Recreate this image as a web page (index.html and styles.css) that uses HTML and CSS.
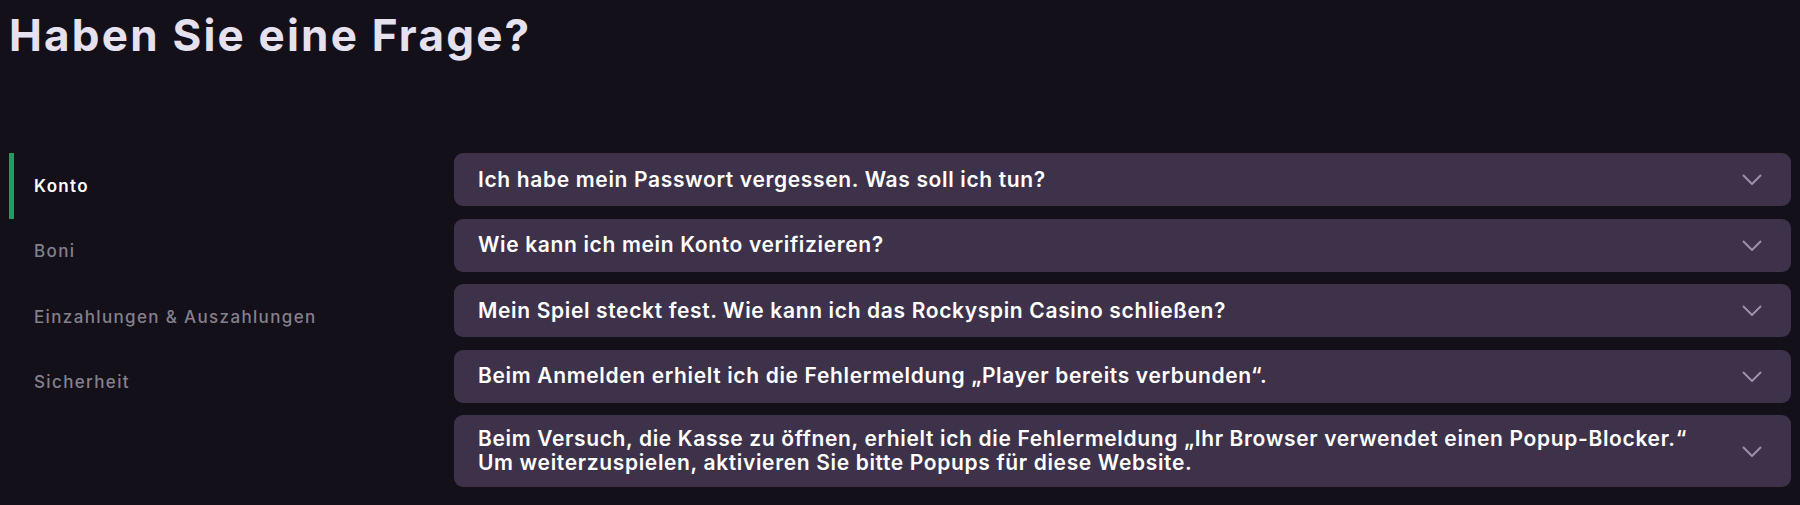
FILE: index.html
```html
<!DOCTYPE html>
<html lang="de">
<head>
<meta charset="utf-8">
<title>Haben Sie eine Frage?</title>
<link rel="stylesheet" href="styles.css">
</head>
<body>
<div class="page">
  <h1 class="title">Haben Sie eine Frage?</h1>
  <div class="faq">
    <nav class="tabs">
      <div class="tab active">Konto</div>
      <div class="tab">Boni</div>
      <div class="tab">Einzahlungen &amp; Auszahlungen</div>
      <div class="tab">Sicherheit</div>
    </nav>
    <div class="list">
      <div class="item"><span class="q">Ich habe mein Passwort vergessen. Was soll ich tun?</span><svg class="chev" viewBox="0 0 20 11" width="20" height="11"><polyline points="1,1 10,10 19,1"/></svg></div>
      <div class="item"><span class="q">Wie kann ich mein Konto verifizieren?</span><svg class="chev" viewBox="0 0 20 11" width="20" height="11"><polyline points="1,1 10,10 19,1"/></svg></div>
      <div class="item"><span class="q">Mein Spiel steckt fest. Wie kann ich das Rockyspin Casino schließen?</span><svg class="chev" viewBox="0 0 20 11" width="20" height="11"><polyline points="1,1 10,10 19,1"/></svg></div>
      <div class="item"><span class="q">Beim Anmelden erhielt ich die Fehlermeldung „Player bereits verbunden“.</span><svg class="chev" viewBox="0 0 20 11" width="20" height="11"><polyline points="1,1 10,10 19,1"/></svg></div>
      <div class="item"><span class="q">Beim Versuch, die Kasse zu öffnen, erhielt ich die Fehlermeldung „Ihr Browser verwendet einen Popup-Blocker.“<br>Um weiterzuspielen, aktivieren Sie bitte Popups für diese Website.</span><svg class="chev" viewBox="0 0 20 11" width="20" height="11"><polyline points="1,1 10,10 19,1"/></svg></div>
    </div>
  </div>
</div>
</body>
</html>
```
FILE: styles.css
```css
html, body {
  margin: 0;
  padding: 0;
  background: #13101a;
}
body {
  font-family: "Inter", "Liberation Sans", sans-serif;
  color: #ffffff;
}
.page {
  padding: 0 9px;
}
.title {
  margin: 0;
  padding-top: 9px;
  font-size: 44px;
  line-height: 52px;
  font-weight: 700;
  color: #e6e1ef;
  letter-spacing: 2.2px;
}
.faq {
  display: grid;
  grid-template-columns: 445px 1fr;
  margin-top: 92px;
}
.tabs {
  display: flex;
  flex-direction: column;
}
.tab {
  height: 65.5px;
  display: flex;
  align-items: center;
  padding-left: 20px;
  font-size: 17px;
  font-weight: 500;
  letter-spacing: 1.35px;
  color: #85808d;
  border-left: 5px solid transparent;
}
.tab.active {
  color: #ffffff;
  font-weight: 600;
  border-left-color: #1a9e62;
}
.list {
  display: flex;
  flex-direction: column;
  gap: 12.5px;
}
.item {
  display: flex;
  align-items: center;
  justify-content: space-between;
  min-height: 53px;
  box-sizing: border-box;
  padding: 12px 29px 12px 24px;
  background: #3d3249;
  border-radius: 9px;
}
.q {
  font-size: 21px;
  font-weight: 600;
  line-height: 24px;
  letter-spacing: 0.65px;
  color: #ffffff;
}
.chev {
  flex: none;
  margin-left: 20px;
}
.chev polyline {
  fill: none;
  stroke: #9d8fae;
  stroke-width: 2;
}
```
